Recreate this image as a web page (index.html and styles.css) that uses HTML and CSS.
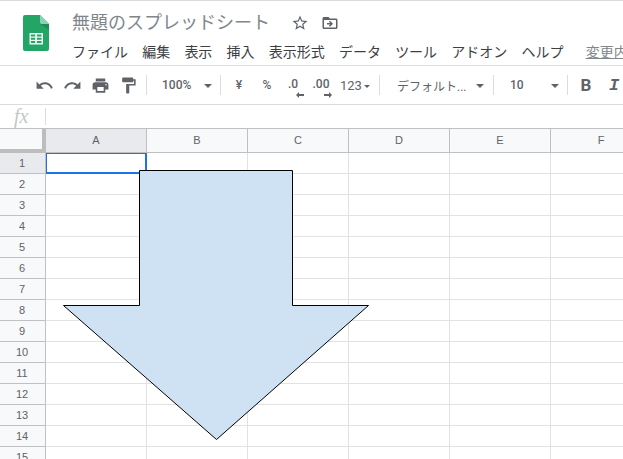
FILE: index.html
```html
<!DOCTYPE html>
<html lang="ja">
<head>
    <meta charset="UTF-8">
    <title>無題のスプレッドシート</title>
    <link rel="stylesheet" href="styles.css">
</head>
<body>
    <div class="app">
        <header class="title-bar">
            <svg class="logo" viewBox="0 0 26 36" width="26" height="36">
                <path d="M2 0h15l9 9v25a2 2 0 0 1-2 2H2a2 2 0 0 1-2-2V2a2 2 0 0 1 2-2z" fill="#23a566"/>
                <path d="M17 9l9 6V9z" fill="#1c8f57"/>
                <path d="M17 0l9 9h-7a2 2 0 0 1-2-2z" fill="#8ed1b1"/>
                <path d="M6.500 18h13.500v11.500H6.500zM8 19.500v2h4.200v-2zM14 19.500v2h4.500v-2zM8 22.800v2h4.200v-2zM14 22.800v2h4.500v-2zM8 26v2h4.200v-2zM14 26v2h4.500v-2z" fill="#f1f8f4" fill-rule="evenodd"/>
            </svg>
            <div class="title-main">
                <div class="title-line">
                    <span class="doc-name">無題のスプレッドシート</span>
                    <svg class="title-icon star" viewBox="0 0 24 24" width="18" height="18"><path d="M22 9.240l-7.190-.62L12 2 9.190 8.630 2 9.240l5.460 4.730L5.820 21 12 17.270 18.180 21l-1.630-7.030L22 9.240zM12 15.400l-3.760 2.270 1-4.280-3.320-2.880 4.380-.38L12 6.100l1.710 4.040 4.380.38-3.320 2.880 1 4.280L12 15.400z"/></svg>
                    <svg class="title-icon" viewBox="0 0 24 24" width="18" height="18"><path d="M20 6h-8l-2-2H4c-1.100 0-2 .9-2 2v12c0 1.100.9 2 2 2h16c1.100 0 2-.9 2-2V8c0-1.100-.9-2-2-2zm0 12H4V8h16v10zm-8-1l4-4-4-4-1.400 1.400 1.600 1.600H8v2h4.200l-1.600 1.600z"/></svg>
                </div>
                <nav class="menu">
                    <span>ファイル</span>
                    <span>編集</span>
                    <span>表示</span>
                    <span>挿入</span>
                    <span>表示形式</span>
                    <span>データ</span>
                    <span>ツール</span>
                    <span>アドオン</span>
                    <span>ヘルプ</span>
                    <span class="last-edit">変更内容をすべて保存しました</span>
                </nav>
            </div>
        </header>

        <div class="toolbar">
            <button class="tool"><svg viewBox="0 0 24 24" width="19" height="19"><path d="M12.500 8c-2.650 0-5.050.99-6.900 2.600L2 7v9h9l-3.620-3.620c1.390-1.160 3.160-1.880 5.120-1.880 3.540 0 6.550 2.310 7.600 5.500l2.370-.78C21.080 11.030 17.150 8 12.500 8z"/></svg></button>
            <button class="tool"><svg viewBox="0 0 24 24" width="19" height="19"><path d="M18.400 10.600C16.550 8.990 14.150 8 11.500 8c-4.650 0-8.580 3.030-9.960 7.220L3.900 16c1.050-3.190 4.050-5.500 7.600-5.500 1.950 0 3.730.72 5.120 1.880L13 16h9V7l-3.600 3.600z"/></svg></button>
            <button class="tool"><svg viewBox="0 0 24 24" width="19" height="19"><path d="M19 8H5c-1.660 0-3 1.340-3 3v6h4v4h12v-4h4v-6c0-1.660-1.340-3-3-3zm-3 11H8v-5h8v5zm3-7c-.55 0-1-.45-1-1s.45-1 1-1 1 .45 1 1-.45 1-1 1zm-1-9H6v4h12V3z"/></svg></button>
            <button class="tool"><svg viewBox="0 0 24 24" width="19" height="19"><path d="M18 4V3c0-.55-.45-1-1-1H5c-.55 0-1 .45-1 1v4c0 .55.45 1 1 1h12c.55 0 1-.45 1-1V6h1v4H9v11c0 .55.45 1 1 1h2c.55 0 1-.45 1-1v-9h8V4h-3z"/></svg></button>
            <i class="sep"></i>
            <div class="select zoom-select"><span>100%</span><b class="caret"></b></div>
            <i class="sep"></i>
            <button class="tool text-tool">¥</button>
            <button class="tool text-tool">%</button>
            <button class="tool text-tool decimal">.0<svg viewBox="0 0 8 6" width="8" height="6"><path d="M3 0v2h5v2H3v2L0 3z"/></svg></button>
            <button class="tool text-tool decimal">.00<svg viewBox="0 0 8 6" width="8" height="6"><path d="M5 0v2H0v2h5v2l3-3z"/></svg></button>
            <div class="select format-select"><span>123</span><b class="caret"></b></div>
            <i class="sep"></i>
            <div class="select font-select"><span>デフォルト...</span><b class="caret"></b></div>
            <i class="sep"></i>
            <div class="select size-select"><span>10</span><b class="caret"></b></div>
            <i class="sep"></i>
            <button class="tool style-tool bold">B</button>
            <button class="tool style-tool italic">I</button>
        </div>

        <div class="formula-bar">
            <span class="fx">fx</span>
            <i class="formula-sep"></i>
        </div>

        <div class="sheet">
            <div class="row head-row">
                <div class="corner"></div>
                <div class="col-head active">A</div>
                <div class="col-head">B</div>
                <div class="col-head">C</div>
                <div class="col-head">D</div>
                <div class="col-head">E</div>
                <div class="col-head">F</div>
            </div>
            <div class="row"><div class="row-head active">1</div><div class="cell"></div><div class="cell"></div><div class="cell"></div><div class="cell"></div><div class="cell"></div><div class="cell"></div></div>
            <div class="row"><div class="row-head">2</div><div class="cell"></div><div class="cell"></div><div class="cell"></div><div class="cell"></div><div class="cell"></div><div class="cell"></div></div>
            <div class="row"><div class="row-head">3</div><div class="cell"></div><div class="cell"></div><div class="cell"></div><div class="cell"></div><div class="cell"></div><div class="cell"></div></div>
            <div class="row"><div class="row-head">4</div><div class="cell"></div><div class="cell"></div><div class="cell"></div><div class="cell"></div><div class="cell"></div><div class="cell"></div></div>
            <div class="row"><div class="row-head">5</div><div class="cell"></div><div class="cell"></div><div class="cell"></div><div class="cell"></div><div class="cell"></div><div class="cell"></div></div>
            <div class="row"><div class="row-head">6</div><div class="cell"></div><div class="cell"></div><div class="cell"></div><div class="cell"></div><div class="cell"></div><div class="cell"></div></div>
            <div class="row"><div class="row-head">7</div><div class="cell"></div><div class="cell"></div><div class="cell"></div><div class="cell"></div><div class="cell"></div><div class="cell"></div></div>
            <div class="row"><div class="row-head">8</div><div class="cell"></div><div class="cell"></div><div class="cell"></div><div class="cell"></div><div class="cell"></div><div class="cell"></div></div>
            <div class="row"><div class="row-head">9</div><div class="cell"></div><div class="cell"></div><div class="cell"></div><div class="cell"></div><div class="cell"></div><div class="cell"></div></div>
            <div class="row"><div class="row-head">10</div><div class="cell"></div><div class="cell"></div><div class="cell"></div><div class="cell"></div><div class="cell"></div><div class="cell"></div></div>
            <div class="row"><div class="row-head">11</div><div class="cell"></div><div class="cell"></div><div class="cell"></div><div class="cell"></div><div class="cell"></div><div class="cell"></div></div>
            <div class="row"><div class="row-head">12</div><div class="cell"></div><div class="cell"></div><div class="cell"></div><div class="cell"></div><div class="cell"></div><div class="cell"></div></div>
            <div class="row"><div class="row-head">13</div><div class="cell"></div><div class="cell"></div><div class="cell"></div><div class="cell"></div><div class="cell"></div><div class="cell"></div></div>
            <div class="row"><div class="row-head">14</div><div class="cell"></div><div class="cell"></div><div class="cell"></div><div class="cell"></div><div class="cell"></div><div class="cell"></div></div>
            <div class="row"><div class="row-head">15</div><div class="cell"></div><div class="cell"></div><div class="cell"></div><div class="cell"></div><div class="cell"></div><div class="cell"></div></div>

            <div class="selection"></div>
            <svg class="arrow-shape" viewBox="0 0 310 274" width="310" height="274">
                <polygon points="78.500,1.500 231.500,1.500 231.500,136.500 307.500,136.500 155.500,270.500 2.500,136.500 78.500,136.500" fill="#cfe2f3" stroke="#000" stroke-width="1"/>
            </svg>
        </div>
    </div>
</body>
</html>
```

FILE: styles.css
```css
* {
    box-sizing: border-box;
}
html, body {
    margin: 0;
    height: 100%;
    overflow: hidden;
}
body {
    background-color: white;
    font-family: Roboto, "Noto Sans CJK JP", sans-serif;
    color: #5f6368;
}
.app {
    width: 623px;
    height: 459px;
    overflow: hidden;
    border-top: 1px solid #dadce0;
}

/* title + menu */
.title-bar {
    display: flex;
    height: 65px;
    padding-left: 23px;
    border-bottom: 1px solid #dadce0;
    white-space: nowrap;
}
.logo {
    flex: none;
    margin-top: 14px;
}
.title-main {
    margin-left: 23px;
    min-width: 0;
}
.title-line {
    display: flex;
    align-items: center;
    height: 26px;
    margin-top: 9px;
}
.doc-name {
    width: 219px;
    margin-bottom: 4px;
    font-size: 18px;
    color: #80868b;
    font-family: "Noto Sans CJK JP", sans-serif;
}
.title-icon {
    flex: none;
    fill: #5f6368;
    margin-right: 11.5px;
}
.menu {
    display: flex;
    gap: 14.2px;
    margin-top: 5px;
    font-family: "Noto Sans CJK JP", sans-serif;
    font-size: 14px;
    line-height: 20px;
    color: #3c4043;
}
.last-edit {
    margin-left: 8px;
    color: #80868b;
    text-decoration: underline;
}

/* toolbar */
.toolbar {
    display: flex;
    align-items: center;
    height: 39px;
    padding-left: 30px;
    border-bottom: 1px solid #dadce0;
    white-space: nowrap;
}
.tool {
    flex: none;
    display: flex;
    align-items: center;
    justify-content: center;
    width: 28px;
    height: 24px;
    padding: 0;
    border: none;
    background: none;
    font-family: Roboto, sans-serif;
    color: #5f6368;
}
.tool svg {
    fill: #5f6368;
}
.sep {
    flex: none;
    width: 1px;
    height: 20px;
    margin: 0 4px;
    background-color: #dadce0;
}
.select {
    flex: none;
    display: flex;
    align-items: center;
    justify-content: space-between;
    font-size: 12px;
    font-weight: 500;
    color: #5f6368;
}
.caret {
    width: 0;
    height: 0;
    margin-top: 2px;
    border-left: 4px solid transparent;
    border-right: 4px solid transparent;
    border-top: 4px solid #5f6368;
}
.zoom-select {
    width: 65px;
    padding: 0 4px 0 11px;
}
.text-tool {
    font-size: 12px;
    font-weight: 500;
}
.decimal {
    position: relative;
    left: -2px;
    padding-bottom: 2px;
}
.decimal svg {
    position: absolute;
    right: 3px;
    bottom: -1px;
}
.format-select {
    width: 30px;
    margin-left: 3px;
    margin-right: 5px;
    font-size: 13px;
    font-weight: 400;
}
.format-select .caret {
    border-width: 3.5px 3.5px 0;
}
.font-select {
    width: 100px;
    margin-right: 5px;
    padding-left: 13px;
    font-weight: 400;
}
.size-select {
    width: 61px;
    margin-right: 4px;
    padding-left: 12px;
}
.bold {
    font-weight: 700;
    font-size: 17px;
}
.italic {
    font-family: "Liberation Mono", monospace;
    font-style: italic;
    font-weight: 700;
    font-size: 17px;
}

/* formula bar */
.formula-bar {
    display: flex;
    align-items: center;
    height: 24px;
    padding-left: 14px;
    border-bottom: 1px solid #c0c0c0;
}
.fx {
    width: 31px;
    font-family: "Liberation Serif", serif;
    font-style: italic;
    font-size: 20px;
    color: #c4c7c5;
}
.formula-sep {
    width: 1px;
    height: 17px;
    background-color: #dadce0;
}

/* grid */
.sheet {
    position: relative;
    font-family: "Liberation Sans", sans-serif;
    font-size: 11px;
    color: #5f6368;
}
.row {
    display: flex;
    height: 21px;
}
.head-row {
    height: 24px;
}
.corner {
    flex: none;
    width: 46px;
    background-color: #f8f9fa;
    border-right: 4px solid #bdbdbd;
    border-bottom: 4px solid #bdbdbd;
}
.col-head {
    flex: none;
    width: 101px;
    display: flex;
    align-items: center;
    justify-content: center;
    padding-bottom: 1px;
    background-color: #f8f9fa;
    border-right: 1px solid #c0c0c0;
    border-bottom: 1px solid #c0c0c0;
}
.row-head {
    flex: none;
    width: 46px;
    display: flex;
    align-items: center;
    justify-content: center;
    background-color: #f8f9fa;
    border-right: 1px solid #c0c0c0;
    border-bottom: 1px solid #c0c0c0;
    padding-right: 1px;
}
.col-head.active,
.row-head.active {
    background-color: #e8eaed;
}
.cell {
    flex: none;
    width: 101px;
    border-right: 1px solid #e2e2e2;
    border-bottom: 1px solid #e2e2e2;
}

/* things floating on the grid */
.selection {
    position: absolute;
    left: 46px;
    top: 24px;
    width: 101px;
    height: 21px;
    border: 2px solid #1a73e8;
    border-top-width: 1px;
    border-left-width: 1px;
}
.arrow-shape {
    position: absolute;
    left: 61px;
    top: 40px;
}
```
